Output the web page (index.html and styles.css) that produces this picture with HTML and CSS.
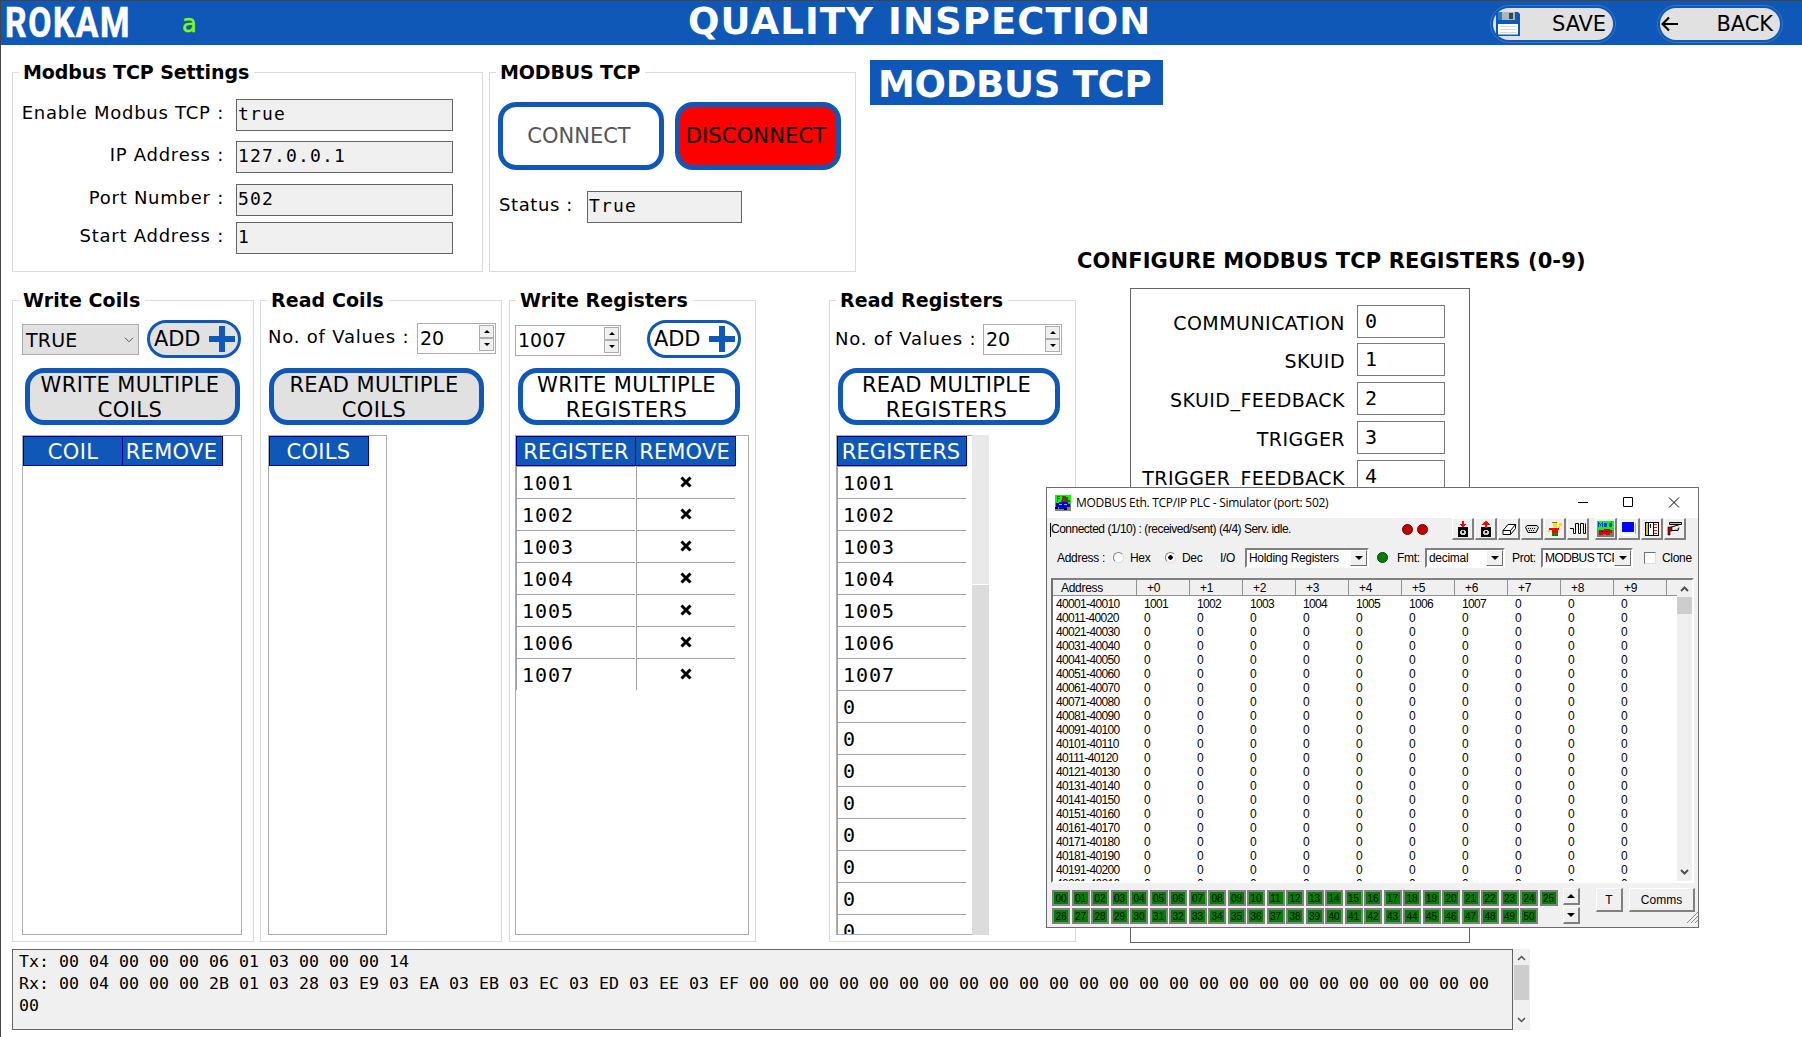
FILE: index.html
```html
<!DOCTYPE html>
<html lang="en">
<head>
<meta charset="utf-8">
<title>Quality Inspection - Modbus TCP</title>
<link rel="stylesheet" href="styles.css">
</head>
<body>
<header class="topbar">
  <div class="brand"><span class="brand-text">ROKAM</span></div>
  <span class="user">a</span>
  <h1 class="title">QUALITY INSPECTION</h1>
  <button class="pill pill-save">
    <svg width="24" height="24" viewBox="0 0 24 24"><path d="M0 0h22l2 2v22H0z" fill="#0f58b8"/><path d="M2 0h17v8H2z" fill="#a9b6bb"/><path d="M2 0h4v8H2z" fill="#2a7fb5"/><path d="M13 1h4v6h-4z" fill="#37474f"/><path d="M2 12h20v10.500H2z" fill="#fff"/><path d="M4 14.500h16M4 17.500h16M4 20.500h16" stroke="#cfd8dc"/></svg>
    <span>SAVE</span>
  </button>
  <button class="pill pill-back">
    <svg width="18" height="16" viewBox="0 0 18 16"><path d="M17 8H2M8 1.500L1.500 8L8 14.500" fill="none" stroke="#000" stroke-width="2.200"/></svg>
    <span>BACK</span>
  </button>
</header>

<main>
  <section class="upper">
    <div class="group settings">
      <h2 class="legend">Modbus TCP Settings</h2>
      <div class="field"><label>Enable Modbus TCP :</label><div class="box">true</div></div>
      <div class="field f2"><label>IP Address :</label><div class="box">127.0.0.1</div></div>
      <div class="field f3"><label>Port Number :</label><div class="box">502</div></div>
      <div class="field f4"><label>Start Address :</label><div class="box">1</div></div>
    </div>
    <div class="group connection">
      <h2 class="legend">MODBUS TCP</h2>
      <div class="conn-buttons">
        <button class="btn connect">CONNECT</button>
        <button class="btn disconnect">DISCONNECT</button>
      </div>
      <div class="status"><label>Status :</label><div class="box">True</div></div>
    </div>
    <div class="page-name">MODBUS TCP</div>
  </section>

  <section class="lower">
    <div class="group wc">
      <h2 class="legend">Write Coils</h2>
      <div class="tools">
        <div class="select"><span>TRUE</span><svg width="10" height="6" viewBox="0 0 10 6"><path d="M1 .8L5 4.800L9 .8" fill="none" stroke="#555"/></svg></div>
        <button class="add grey">ADD<i class="plus"></i></button>
      </div>
      <button class="btn multi grey">WRITE MULTIPLE<br>COILS</button>
      <div class="grid">
        <div class="thead"><div>COIL</div><div>REMOVE</div></div>
      </div>
    </div>
    <div class="group rc">
      <h2 class="legend">Read Coils</h2>
      <div class="tools">
        <label>No. of Values :</label>
        <div class="spin"><span>20</span><div class="steps"><i class="up"></i><i class="down"></i></div></div>
      </div>
      <button class="btn multi grey">READ MULTIPLE<br>COILS</button>
      <div class="grid">
        <div class="thead"><div>COILS</div></div>
      </div>
    </div>
    <div class="group wr">
      <h2 class="legend">Write Registers</h2>
      <div class="tools">
        <div class="spin"><span>1007</span><div class="steps"><i class="up"></i><i class="down"></i></div></div>
        <button class="add">ADD<i class="plus"></i></button>
      </div>
      <button class="btn multi">WRITE MULTIPLE<br>REGISTERS</button>
      <div class="grid">
        <div class="thead"><div>REGISTER</div><div>REMOVE</div></div>
        <div id="write-rows"></div>
      </div>
    </div>
    <div class="group rr">
      <h2 class="legend">Read Registers</h2>
      <div class="tools">
        <label>No. of Values :</label>
        <div class="spin"><span>20</span><div class="steps"><i class="up"></i><i class="down"></i></div></div>
      </div>
      <button class="btn multi">READ MULTIPLE<br>REGISTERS</button>
      <div class="grid-scroll">
        <div class="grid">
          <div class="thead"><div>REGISTERS</div></div>
          <div id="read-rows"></div>
        </div>
        <div class="vtrack"><i></i></div>
      </div>
    </div>
    <div class="config">
      <h2>CONFIGURE MODBUS TCP REGISTERS (0-9)</h2>
      <div class="config-panel">
        <div class="reg"><label>COMMUNICATION</label><div>0</div></div>
        <div class="reg"><label>SKUID</label><div>1</div></div>
        <div class="reg"><label>SKUID_FEEDBACK</label><div>2</div></div>
        <div class="reg"><label>TRIGGER</label><div>3</div></div>
        <div class="reg"><label>TRIGGER_FEEDBACK</label><div>4</div></div>
      </div>
    </div>
  </section>

  <section class="log">
    <pre class="log-text">Tx: 00 04 00 00 00 06 01 03 00 00 00 14
Rx: 00 04 00 00 00 2B 01 03 28 03 E9 03 EA 03 EB 03 EC 03 ED 03 EE 03 EF 00 00 00 00 00 00 00 00 00 00 00 00 00 00 00 00 00 00 00 00 00 00 00 00 00
00</pre>
    <div class="log-scroll">
      <svg width="9" height="6" viewBox="0 0 9 6"><path d="M1 5L4.500 1.500L8 5" fill="none" stroke="#505050" stroke-width="1.500"/></svg>
      <i></i>
      <svg width="9" height="6" viewBox="0 0 9 6"><path d="M1 1L4.500 4.500L8 1" fill="none" stroke="#505050" stroke-width="1.500"/></svg>
    </div>
  </section>
</main>

<div class="sim">
  <div class="sim-title">
    <svg width="16" height="16" viewBox="0 0 16 16" shape-rendering="crispEdges"><path d="M0 0h16v8H0z" fill="#0f0"/><path d="M0 8h16v8H0z" fill="#808080"/><path d="M2 1h3v1H3v1h2v1H3v3H2z" fill="#a02000"/><path d="M7 1h4v1h2v3h2v2H6V5h1z" fill="#664018"/><path d="M1 8h3V7h9v2h2v3h-3v2H4v-2H1z" fill="#0000d8"/><path d="M4 9h3v1H4zM9 9h3v1H9z" fill="#8ad"/><path d="M0 12h3v2H0zM9 13h3v2H9z" fill="#000"/></svg>
    <span>MODBUS Eth. TCP/IP PLC - Simulator (port: 502)</span>
    <svg class="win" width="102" height="12" viewBox="0 0 102 12"><path d="M0 5.500h10M45.500 .5h9v9h-9zM91 .5l10 10M101 .5l-10 10" fill="none" stroke="#000"/></svg>
  </div>
  <div class="sim-status">
    <span>Connected (1/10) : (received/sent) (4/4) Serv. idle.</span>
    <i class="dot red"></i><i class="dot red"></i>
    <div class="sim-tools">
      <b><svg width="16" height="16" viewBox="0 0 16 16" shape-rendering="crispEdges"><path d="M3 6h10v10H3z"/><path d="M7 0h2v3h2v1h-1v1H9v1H7V5H6V4H5V3h2z" fill="red"/><path d="M6 9h4v1h1v3h-1v1H6v-1H5v-3h1z" fill="#ccc"/><path d="M7 10h2v2H7z"/></svg></b>
      <b><svg width="16" height="16" viewBox="0 0 16 16" shape-rendering="crispEdges"><path d="M3 6h10v10H3z"/><path d="M7 0h2v1h1v1h1v1h1v1H9v3H7V4H4V3h1V2h1V1h1z" fill="red"/><path d="M6 9h4v1h1v3h-1v1H6v-1H5v-3h1z" fill="#ccc"/><path d="M7 10h2v2H7z"/></svg></b>
      <b><svg width="16" height="16" viewBox="0 0 16 16"><path d="M2 9.500L7 3.500h7.500l-5 6zM2 9.500v4h7.500v-4M9.500 13.500l5-6v-4" fill="#fff" stroke="#000"/></svg></b>
      <b><svg width="16" height="16" viewBox="0 0 16 16"><path d="M3 4.500h10l1.500 2-2.500 5H4l-2.500-5z" fill="#ddd" stroke="#000"/><path d="M4 7.500h8M5 9.500h6" stroke="#000" stroke-dasharray="1 1"/></svg></b>
      <b><svg width="16" height="16" viewBox="0 0 16 16" shape-rendering="crispEdges"><path d="M6 1h4v5H6z" fill="#fd0"/><path d="M5 1h5v1H5z" fill="#a60"/><path d="M12 2h3v3h-2v2h-2V5h1zM1 9h2v2H1z" fill="#fd0"/><path d="M2 7h10v2h-1v3H5V9H2z" fill="red"/><path d="M5 12h6v3H5z" fill="#080"/></svg></b>
      <b><svg width="16" height="16" viewBox="0 0 16 16"><path d="M0 7.500h3.500V12.500H5.500V2.500H8.500V12.500H10.500V2.500H13.500V12.500H15.500V2.500" fill="none" stroke="#000"/></svg></b>
      <b class="gap"><svg width="17" height="16" viewBox="0 0 17 16" shape-rendering="crispEdges"><path d="M0 0h17v16H0z" fill="#0f0"/><path d="M0 9h17v7H0z" fill="#708070"/><path d="M1 1h1v1h1v1h1V2h1V1h1v5H5V3H4v2H3V3H2v3H1zM7 2h3v4H7zM14 0h1v6h-3V2h2z" fill="#003cff"/><path d="M2 9h5V8h6v1h2v3h-2v2H9v-1H6v1H2z" fill="#e00000"/><path d="M4 10h2v1H4zM9 10h2v1H9z"/></svg></b>
      <b><svg width="16" height="16" viewBox="0 0 16 16" shape-rendering="crispEdges"><path d="M0 0h14v11H0z" fill="#fff"/><path d="M1 1h12v10H1z" fill="#00f"/><path d="M2 12h1v1h9v-1h2v3H1v-1z" fill="#fff"/><path d="M14 2h1v11h-1z" fill="#aaa"/></svg></b>
      <b><svg width="16" height="16" viewBox="0 0 16 16" shape-rendering="crispEdges"><path d="M1 1h14v14H1z"/><path d="M2 2h2v12H2z" fill="#cc3"/><path d="M5 2h4v12H5zM10 2h4v12h-4z" fill="#fff"/><path d="M6 3h1v4H6z"/><path d="M10 3h3v1h-3zM10 6h3v1h-3zM10 9h3v1h-3zM10 12h3v1h-3z" fill="red"/></svg></b>
      <b><svg width="16" height="16" viewBox="0 0 16 16"><path d="M2.500 1.500h12v2h-12zM3 6.500L13 3.500M5 9.500h6l1-3" fill="#bbb" stroke="#000"/><path d="M1 6h4v4H3v4H1z" fill="#c00000" stroke="#000" stroke-width=".6"/></svg></b>
    </div>
  </div>
  <div class="sim-opts">
    <span class="o-addr">Address :</span><i class="radio"></i><span class="o-hex">Hex</span>
    <i class="radio on"></i><span class="o-dec">Dec</span><span class="o-io">I/O</span>
    <div class="combo c-hold"><span>Holding Registers</span><i></i></div>
    <i class="dot green"></i><span class="o-fmt">Fmt:</span>
    <div class="combo c-dec"><span>decimal</span><i></i></div>
    <span class="o-prot">Prot:</span>
    <div class="combo c-prot"><span>MODBUS TCP</span><i></i></div>
    <i class="check"></i><span class="o-clone">Clone</span>
  </div>
  <div class="sim-table">
    <div class="sim-data">
      <div class="sim-head" id="sim-head"></div>
      <div id="sim-rows"></div>
    </div>
    <div class="sim-scroll">
      <svg width="9" height="6" viewBox="0 0 9 6"><path d="M1 5L4.500 1.500L8 5" fill="none" stroke="#505050" stroke-width="2"/></svg>
      <i></i>
      <svg class="dn" width="9" height="6" viewBox="0 0 9 6"><path d="M1 1L4.500 4.500L8 1" fill="none" stroke="#505050" stroke-width="2"/></svg>
    </div>
  </div>
  <div class="sim-foot">
    <div class="leds" id="leds"></div>
    <div class="updown"><b class="raised"><i class="up"></i></b><b class="raised"><i class="down"></i></b></div>
    <b class="raised t">T</b>
    <b class="raised comms">Comms</b>
    <svg class="grip" width="11" height="11" viewBox="0 0 11 11"><path d="M0 11L11 0M4 11l7-7M8 11l3-3" stroke="#888"/></svg>
  </div>
</div>
<script src="app.js"></script>
</body>
</html>
```

FILE: app.js
```js
const values = [1001, 1002, 1003, 1004, 1005, 1006, 1007];
const cross = '<svg width="12" height="12" viewBox="0 0 12 12"><path d="M1.500 1.500L10.500 10.500M10.500 1.500L1.500 10.500" stroke="#000" stroke-width="3"/></svg>';

document.getElementById('write-rows').innerHTML =
  values.map(v => `<div class="trow"><div>${v}</div><div class="x">${cross}</div></div>`).join('');

document.getElementById('read-rows').innerHTML =
  Array.from({ length: 15 }, (_, i) => `<div class="trow"><div>${values[i] || 0}</div></div>`).join('');

document.getElementById('sim-head').innerHTML =
  '<div>Address</div>' + Array.from({ length: 10 }, (_, i) => `<div>+${i}</div>`).join('') + '<div></div>';

document.getElementById('sim-rows').innerHTML =
  Array.from({ length: 21 }, (_, r) => {
    const from = 40001 + r * 10;
    const cells = Array.from({ length: 10 }, (_, c) => `<div>${r === 0 && values[c] || 0}</div>`).join('');
    return `<div class="sim-row"><div>${from}-${from + 9}</div>${cells}</div>`;
  }).join('');

document.getElementById('leds').innerHTML =
  Array.from({ length: 51 }, (_, i) => `<span>${String(i).padStart(2, '0')}</span>`).join('');
```

FILE: styles.css
```css
* { box-sizing: border-box; margin: 0; padding: 0; }

body {
  width: 1802px;
  height: 1037px;
  overflow: hidden;
  background: #fff;
  color: #000;
  border-left: 1px solid #444;
  border-top: 1px solid #444;
  font: 18px/22px "DejaVu Sans", sans-serif;
  position: relative;
}
button { font: inherit; color: inherit; }
i, b { font-style: normal; font-weight: normal; }

/* Header */
.topbar { display: flex; height: 44px; background: #0f58b8; color: #fff; }
.brand { width: 181px; padding: 1px 0 0 4px; }
.brand-text {
  display: block;
  font: bold 42px/41px Roboto, sans-serif;
  letter-spacing: 2px;
  -webkit-text-stroke: .7px #fff;
  transform: scaleX(.8);
  transform-origin: 0 0;
}
.user { width: 20px; color: #80ff00; font-size: 24px; line-height: 46px; -webkit-text-stroke: .5px #80ff00; }
.title { width: 490px; margin-left: 486px; font-size: 37px; line-height: 42px; letter-spacing: 1.1px; white-space: nowrap; }
.pill {
  display: flex;
  align-items: center;
  justify-content: space-between;
  width: 120px;
  height: 32px;
  margin-top: 7px;
  background: #e1e1e1;
  color: #000;
  border: 0;
  border-radius: 16px;
  font-size: 21px;
  line-height: 34px;
  letter-spacing: -.1px;
  outline: 1px solid #3a74c4;
  outline-offset: 2px;
  padding: 0 7px 0 3px;
}
.pill-save { margin-left: 315px; }
.pill-back { margin-left: 47px; padding-left: 1px; }

/* Group boxes */
.group { border: 1px solid #dcdcdc; }
.legend {
  width: max-content;
  height: 20px;
  margin: -11px 0 0 6px;
  padding: 0 5px 0 4px;
  background: #fff;
  font-size: 19px;
  line-height: 20px;
  white-space: nowrap;
}
.upper { display: flex; height: 227px; padding: 27px 0 0 11px; }
.settings { width: 471px; height: 200px; }
.settings .legend { letter-spacing: -.08px; }
.connection { width: 367px; height: 200px; margin-left: 6px; }
.connection .legend { letter-spacing: -.15px; }
.field { display: flex; margin-top: 17px; }
.field label { width: 211px; margin-right: 12px; text-align: right; line-height: 28px; letter-spacing: .75px; }
.f2 { margin-top: 10px; }
.f3 { margin-top: 11px; }
.f4 { margin-top: 6px; }
.box {
  width: 217px;
  height: 32px;
  padding-left: 1px;
  border: 1px solid #646464;
  background: #f0f0f0;
  font: 18px/27px "DejaVu Sans Mono", monospace;
  letter-spacing: 1.160px;
}
.btn { border: 5px solid #0f58b8; background: #fff; font-size: 21px; line-height: 25px; text-align: center; }
.conn-buttons { display: flex; gap: 11px; margin: 20px 0 0 8px; }
.connect, .disconnect { width: 166px; height: 68px; border-radius: 18px; white-space: nowrap; }
.connect { color: #555; }
.disconnect { background: #f00; letter-spacing: .15px; }
.conn-buttons .btn { padding: 1px 4px 0 0; display: flex; align-items: center; justify-content: center; }
.status { display: flex; margin: 21px 0 0 9px; }
.status label { width: 88px; line-height: 28px; letter-spacing: .6px; }
.status .box { width: 155px; }
.page-name {
  width: 293px;
  height: 45px;
  margin: -12px 0 0 14px;
  padding-left: 8px;
  background: #0f58b8;
  color: #fff;
  font-size: 37px;
  font-weight: bold;
  line-height: 50px;
  letter-spacing: -.3px;
  white-space: nowrap;
}

/* Register and coil groups */
.lower { display: flex; align-items: flex-start; padding: 0 0 0 11px; height: 670px; }
.lower .group { height: 642px; margin-top: 28px; }
.lower .legend { letter-spacing: .08px; }
.wc { width: 242px; }
.rc { width: 242px; margin-left: 6px; }
.wr { width: 247px; margin-left: 7px; }
.rr { width: 247px; margin-left: 73px; }
.tools { display: flex; height: 48px; margin-top: 10px; }
.grey { background: #e1e1e1 !important; }
.select {
  display: flex;
  align-items: center;
  justify-content: space-between;
  width: 117px;
  height: 31px;
  margin: 4px 8px 0 9px;
  padding: 0 4px 0 3px;
  border: 1px solid #adadad;
  background: #e1e1e1;
  font-size: 19px;
  letter-spacing: .2px;
}
.add {
  display: flex;
  align-items: center;
  justify-content: space-between;
  width: 94px;
  height: 38px;
  padding: 0 3px 0 4px;
  border: 3px solid #0f58b8;
  border-radius: 19px;
  background: #fff;
  font-size: 21px;
  letter-spacing: -.2px;
}
.plus {
  flex: none;
  width: 26px;
  height: 26px;
  background:
    linear-gradient(#0f58b8, #0f58b8) center / 26px 6px no-repeat,
    linear-gradient(#0f58b8, #0f58b8) center / 6px 26px no-repeat;
}
.multi { display: block; width: 215px; height: 57px; border-radius: 19px; padding: 0 5px 1px 0; letter-spacing: .4px; white-space: nowrap; }
.wc .multi { margin-left: 12px; }
.rc .multi { margin-left: 8px; }
.wr .multi { width: 222px; margin-left: 8px; }
.rr .multi { width: 222px; margin-left: 8px; }
.tools label { letter-spacing: .8px; white-space: nowrap; }
.rc label { width: 148px; margin-left: 7px; line-height: 34px; }
.rr label { width: 148px; margin-left: 5px; line-height: 38px; }
.spin {
  display: flex;
  justify-content: space-between;
  width: 79px;
  height: 31px;
  padding: 1px 1px 0 2px;
  border: 1px solid #adadad;
  font-size: 19px;
  line-height: 26px;
}
.rc .spin { margin-left: 1px; margin-top: 3px; }
.rr .spin { margin-top: 4px; }
.wr .spin { width: 106px; margin: 5px 26px 0 5px; }
.steps { width: 15px; }
.steps i {
  display: flex;
  align-items: center;
  justify-content: center;
  height: 13px;
  border: 1px solid #adadad;
  background: #f0f0f0;
}
.steps i::before { content: ""; border: 3px solid transparent; }
.updown i { border: 4px solid transparent; }
.steps .up::before, .updown .up { border-top: 0; border-bottom-color: #000; }
.steps .down::before, .updown .down { border-bottom: 0; border-top-color: #000; }

.grid { height: 500px; margin-top: 10px; border: 1px solid #adadad; overflow: hidden; }
.wc .grid { width: 220px; margin-left: 9px; }
.rc .grid { width: 119px; margin-left: 7px; }
.wr .grid { width: 234px; margin-left: 5px; }
.thead { display: flex; height: 30px; border: 1px solid #0000a0; background: #0f58b8; color: #fff; font-size: 21px; line-height: 31px; letter-spacing: .3px; text-align: center; }
.thead div + div { border-left: 1px solid #0000a0; }
.wc .thead { width: 200px; }
.wc .thead div { width: 98px; }
.wc .thead div + div { width: 98px; }
.rc .thead { width: 100px; }
.rc .thead div { width: 97px; }
.wr .thead { width: 220px; }
.wr .thead div { width: 118px; letter-spacing: .15px; }
.wr .thead div + div { width: 98px; }
.rr .thead { width: 130px; }
.rr .thead div { width: 126px; letter-spacing: .1px; }
.trow { display: flex; gap: 1px; }
.trow div {
  width: 119px;
  height: 32px;
  padding-left: 5px;
  border-left: 1px solid #a0a0a0;
  border-top: 1px solid #a0a0a0;
  font: 20px/32px "DejaVu Sans Mono", monospace;
  letter-spacing: 1px;
}
.trow .x { width: 99px; padding: 0; display: flex; align-items: center; justify-content: center; }
.trow .x svg { margin-bottom: 1px; }
.rr .trow div { width: 129px; }
.grid-scroll { display: flex; margin: 10px 0 0 6px; }
.grid-scroll .grid { width: 136px; margin: 0; border-right: 0; }
.vtrack { width: 17px; height: 500px; background: #dcdcdc; }
.vtrack i { display: block; height: 150px; background: #e9e9e9; border-bottom: 1px solid #fff; }

/* Register configuration */
.config { width: 600px; margin-top: -22px; }
.config h2 { margin-left: 1px; font-size: 21px; line-height: 22px; letter-spacing: .12px; white-space: nowrap; }
.config-panel { width: 340px; height: 655px; margin: 16px 0 0 54px; border: 1px solid #646464; padding-top: 16px; }
.reg { display: flex; height: 39px; }
.reg:first-child { height: 38px; }
.reg label { width: 214px; margin-right: 12px; text-align: right; font-size: 19px; line-height: 36px; letter-spacing: .45px; }
.reg div { width: 88px; height: 33px; padding-left: 7px; border: 1px solid #7a7a7a; font: 20px/31px "DejaVu Sans Mono", monospace; }

/* Traffic log */
.log { display: flex; height: 81px; margin: 7px 0 0 11px; }
.log-text {
  width: 1501px;
  padding: 1px 0 0 6px;
  border: 1px solid #646464;
  background: #f0f0f0;
  font: 16.610px/22px "DejaVu Sans Mono", monospace;
}
.log-scroll { display: flex; flex-direction: column; align-items: center; width: 17px; padding: 6px 0; background: #f0f0f0; }
.log-scroll i { width: 15px; height: 35px; margin: 4px 0 17px; background: #cdcdcd; }

/* Simulator window */
.sim {
  position: absolute;
  left: 1045px;
  top: 486px;
  width: 653px;
  height: 441px;
  border: 1px solid #6b6b6b;
  background: #f0f0f0;
  font: 12px/14px "Liberation Sans", sans-serif;
}
.sim span { white-space: nowrap; }
.sim-title { display: flex; align-items: center; height: 30px; padding-left: 8px; background: #fff; font: 12px/30px "Open Sans", sans-serif; }
.sim-title span { width: 502px; margin-left: 5px; letter-spacing: -.28px; }
.sim-status { display: flex; height: 30px; }
.sim-status span { width: 353px; height: 14px; margin: 5px 0 0 3px; border-left: 1px solid #000; line-height: 13px; letter-spacing: -.5px; }
.dot { width: 11px; height: 11px; border-radius: 50%; border: 1px solid #700; }
.red { margin: 6px 4px 0 -1px; background: #c00000; }
.red + .red { margin-left: 0; }
.sim-tools { display: flex; margin-left: 20px; }
.sim-tools b {
  display: flex;
  align-items: center;
  justify-content: center;
  width: 22px;
  height: 22px;
  margin-right: 1px;
  border: solid;
  border-width: 1px 2px 2px 1px;
  border-color: #fff #808080 #808080 #fff;
}
.sim-tools svg { flex: none; }
.sim-tools .gap { margin-left: 5px; }
.sim-opts { display: flex; height: 30px; letter-spacing: -.3px; }
.sim-opts > span { line-height: 21px; }
.o-addr { width: 56px; margin-left: 10px; }
.radio { width: 11px; height: 11px; margin-top: 4px; border-radius: 50%; background: #fff; border: 1px solid; border-color: #808080 #ddd #ddd #808080; }
.radio.on { background: radial-gradient(circle, #000 0 2px, #fff 2.500px); }
.o-hex { width: 35px; margin-left: 6px; }
.o-dec { width: 38px; margin-left: 6px; }
.o-io { width: 25px; }
.combo { display: flex; height: 20px; border: 2px solid; border-color: #808080 #fff #fff #808080; background: #fff; line-height: 16px; overflow: hidden; }
.combo span { flex: 1; padding-left: 2px; overflow: hidden; }
.combo i { flex: none; width: 17px; height: 16px; border: 1px solid; border-color: #fff #707070 #707070 #fff; background: #f0f0f0; }
.combo i::before { content: ""; display: block; width: 0; margin: 5px 0 0 4px; border: 4px solid transparent; border-top-color: #000; border-bottom: 0; }
.c-hold { width: 124px; }
.c-dec { width: 80px; }
.c-prot { width: 92px; letter-spacing: -.6px; }
.green { margin: 4px 9px 0 8px; background: #008000; border-color: #040; }
.o-fmt { width: 28px; }
.o-prot { width: 29px; margin-left: 7px; }
.check { width: 12px; height: 12px; margin: 4px 6px 0 11px; background: #fff; border: 1px solid; border-color: #707070 #ddd #ddd #707070; }

.sim-table { display: flex; width: 643px; height: 305px; margin-left: 4px; border: 2px solid; border-color: #808080 #fff #fff #707070; background: #fff; }
.sim-data { width: 624px; overflow: hidden; }
.sim-head { display: flex; height: 16px; background: #f0f0f0; line-height: 17px; }
.sim-head div { flex: none; width: 53px; padding-left: 10px; border-right: 1px solid #909090; border-bottom: 1px solid #909090; letter-spacing: -.3px; }
.sim-head div:first-child { width: 84px; padding-left: 8px; }
.sim-row { display: flex; height: 14px; line-height: 14px; }
.sim-head + div { padding-top: 1px; }
.sim-row div { flex: none; width: 53px; padding-left: 0; letter-spacing: -.65px; }
.sim-row div:first-child { width: 91px; padding-left: 3px; }
.sim-scroll { display: flex; flex-direction: column; align-items: center; width: 15px; padding: 6px 0; background: #f0f0f0; }
.sim-scroll i { width: 15px; height: 17px; margin-top: 5px; background: #cdcdcd; }
.sim-scroll .dn { margin-top: auto; }

.sim-foot { display: flex; height: 44px; position: relative; padding-top: 5px; }
.leds { display: grid; grid-template-columns: repeat(26, 19.500px); grid-auto-rows: 18px; margin: 2px 0 0 5px; }
.leds span { width: 18px; height: 16px; border: 2px solid #808080; background: #008000; font-size: 10px; line-height: 13px; text-align: center; }
.raised { display: flex; align-items: center; justify-content: center; border: solid; border-width: 1px 2px 2px 1px; border-color: #fff #808080 #808080 #fff; background: #f0f0f0; }
.updown { display: flex; flex-direction: column; gap: 2px; margin-left: 4px; }
.updown b { width: 17px; height: 17px; }
.t { width: 27px; height: 24px; margin-left: 16px; }
.comms { width: 66px; height: 24px; margin-left: 6px; }
.grip { position: absolute; right: 0; bottom: 4px; }
```
